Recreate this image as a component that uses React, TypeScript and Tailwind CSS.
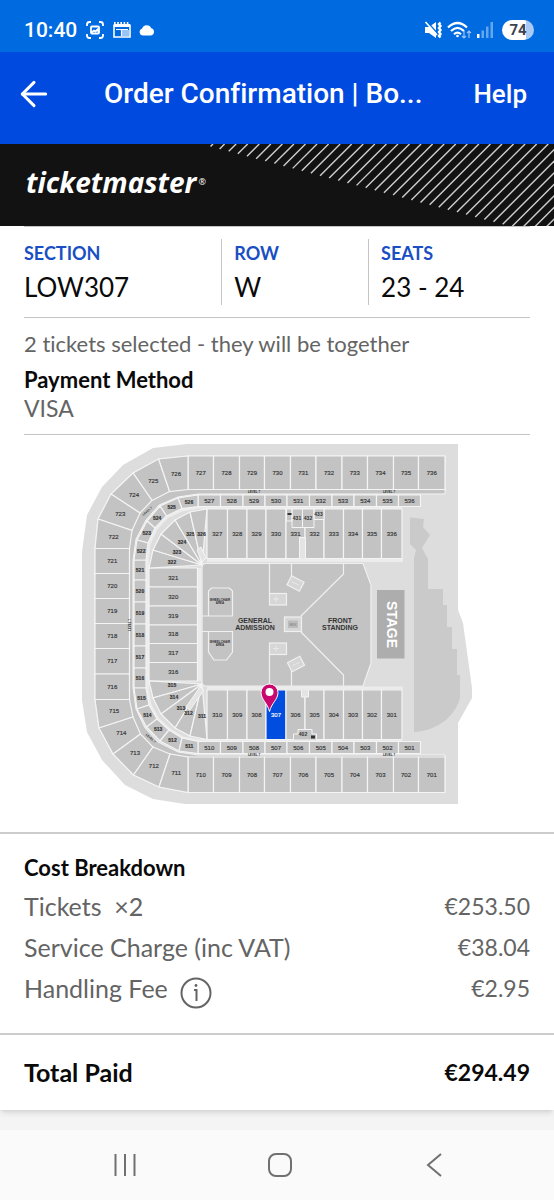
import { ArrowLeft } from 'lucide-react'

type Point = [number, number]
type Block = { label: string; points: Point[]; at?: Point; small?: boolean }

const range = (from: number, count: number, step: number) =>
  Array.from({ length: count }, (_, i) => String(from + i * step))

// straight run of blocks between consecutive x edges
const rowBlocks = (labels: string[], xs: number[], y1: number, y2: number): Block[] =>
  labels.map((label, i) => ({
    label,
    points: [[xs[i], y1], [xs[i + 1], y1], [xs[i + 1], y2], [xs[i], y2]],
  }))

const columnBlocks = (labels: string[], ys: number[], x1: number, x2: number, small = false): Block[] =>
  labels.map((label, i) => ({
    label,
    small,
    points: [[x1, ys[i]], [x2, ys[i]], [x2, ys[i + 1]], [x1, ys[i + 1]]],
  }))

// curved run, one block between each pair of outer/inner points
const bendBlocks = (labels: string[], outer: Point[], inner: Point[], small = false): Block[] =>
  labels.map((label, i) => ({
    label,
    small,
    points: [outer[i], outer[i + 1], inner[i + 1], inner[i]],
  }))

const fanBlocks = (labels: string[], outer: Point[], origin: Point, at: Point[]): Block[] =>
  labels.map((label, i) => ({
    label,
    small: true,
    at: at[i],
    points: [outer[i], outer[i + 1], origin],
  }))

const X700 = [188, 213.5, 239.5, 264.5, 290.5, 316, 342, 367.5, 393.5, 418.5, 445]
const X500 = [198, 220.5, 243, 265, 287, 309.5, 332, 354, 376.5, 398.5, 420.5]
const X300 = [207, 227.5, 247, 266, 286, 305, 324, 343.5, 362.5, 381.5, 402]

const blocks: Block[] = [
  ...rowBlocks(range(727, 10, 1), X700, 456, 489.5),
  ...rowBlocks(range(710, 10, -1), X700, 757, 792.5),
  ...columnBlocks(range(721, 6, -1), [548.5, 573.5, 598.5, 623.5, 648.5, 674, 699.5], 95, 129.5),
  ...bendBlocks(
    range(726, 5, -1),
    [[188, 456], [158.5, 459], [133, 473], [111, 494], [98, 519], [95, 548.5]],
    [[188, 489.5], [169.5, 491.5], [152, 500.5], [140, 513], [132, 530.5], [129.5, 548.5]],
  ),
  ...bendBlocks(
    range(715, 5, -1),
    [[95, 699.5], [99, 728], [113, 754], [133.5, 775], [159, 787], [188, 792.5]],
    [[129.5, 699.5], [133, 717], [140.5, 734], [153, 747], [170, 754], [188, 757]],
  ),
  ...rowBlocks(range(527, 10, 1), X500, 495, 506.5),
  ...rowBlocks(range(510, 10, -1), X500, 741.5, 753.5),
  ...columnBlocks(range(521, 6, -1), [560, 580, 602, 624, 646, 668, 688], 134, 146, true),
  ...bendBlocks(
    range(526, 5, -1),
    [[198, 495], [178, 498], [160, 506], [147, 521], [137, 540], [134, 560]],
    [[198, 506.5], [182, 508.5], [166.5, 516], [155, 528], [148, 543], [146, 560]],
    true,
  ),
  ...bendBlocks(
    range(515, 5, -1),
    [[134, 688], [137, 709], [146.5, 727], [160, 741], [179, 751], [198, 753.5]],
    [[146, 688], [149, 705], [157, 719], [169, 730], [182, 738], [198, 741.5]],
    true,
  ),
  ...rowBlocks(range(327, 10, 1), X300, 509, 558.5),
  ...rowBlocks(range(310, 10, -1), X300, 690, 739.5),
  ...columnBlocks(range(321, 6, -1), [568, 587, 606, 625, 643.5, 662.5, 681], 149, 197.5),
  ...fanBlocks(
    range(322, 5, 1),
    [[149, 568], [153, 550], [161, 534], [175, 520], [190, 512], [207, 509]],
    [202, 565],
    [[172, 562], [177, 551.5], [182, 542], [190.5, 534], [201.5, 534]],
  ),
  ...fanBlocks(
    range(315, 5, -1),
    [[149, 681], [153, 698], [161, 714], [175, 728], [190, 736], [207, 739.5]],
    [202, 684],
    [[172, 684.5], [174, 697], [181, 708], [188.5, 712.5], [202, 715.5]],
  ),
]

const SELECTED = '307'

const toPoints = (points: Point[]) => points.map((p) => p.join(',')).join(' ')

const centre = (points: Point[]): Point => [
  points.reduce((sum, p) => sum + p[0], 0) / points.length,
  points.reduce((sum, p) => sum + p[1], 0) / points.length,
]

function SeatMap() {
  return (
    <svg
      viewBox="82 443 391 362"
      className="mx-auto block w-full max-w-[391px]"
      fontFamily="'Liberation Sans', sans-serif"
      textAnchor="middle"
      role="img"
      aria-label="Seat map"
    >
      <path
        d="M458 444H187L153 448L123 465L102 487L87 515L82 552V700L87 732L102 760L125 785L153 799L185 804H458V723L472 698V688L463 623L458 610Z"
        fill="#dddddd"
      />
      {/* walkway between the 700s and the 500s */}
      <path
        d="M445 456H188L158.500 459L133 473L111 494L98 519L95 548V700L99 728L113 754L133.500 775L159 787L188 792.500H445V755H198L178 752L158 742L145 728L136 709L133 688V560L136 539L146 520L159 505L178 497L198 494H445Z"
        fill="#c3c3c3"
        stroke="#f4f4f4"
      />
      {/* aisle around the 300s */}
      <path
        d="M402 507.500H198L182 510L167 517L156 529L149 544L147.500 560V688L150 705L158 719L170 730L183 738L198 740.500H402"
        fill="none"
        stroke="#ececec"
        strokeWidth="3"
      />

      {blocks.map(({ label, points, at, small }) => {
        const [x, y] = at ?? centre(points)
        const selected = label === SELECTED
        return (
          <g key={label}>
            <polygon
              points={toPoints(points)}
              fill={selected ? '#004de0' : '#c3c3c3'}
              stroke="#f4f4f4"
              strokeWidth="1.2"
            />
            <text
              x={x}
              y={y + 2}
              fontSize={small ? 5 : 6}
              fontWeight={small ? 700 : 400}
              fill={selected ? '#ffffff' : '#333333'}
              stroke={selected ? '#ffffff' : '#333333'}
              strokeWidth="0.15"
            >
              {label}
            </text>
          </g>
        )
      })}

      {/* 400s */}
      <g fill="#c3c3c3" stroke="#f4f4f4">
        <path d="M286.500 509h5.500v12h-5.500zM292 509h10.500v18.500H292zM302.500 509h11.500v18.500h-11.500zM314 509h10v10.500h-10z" />
        <path d="M299.500 558.500V537.500h6V558.500M301.500 690v7h7v-7" fill="#e4e4e4" />
        <path d="M293.500 739.500V734H298V729.500H312V734H316.500V739.500" />
        <path d="M197 550l4 -3l5 11l-4 4zM186 707l4 3l14 -20l-4 -3z" fill="#e4e4e4" />
      </g>
      <g fontSize="5" fontWeight="700" fill="#333333">
        <text x="297" y="520">431</text>
        <text x="308" y="520">432</text>
        <text x="318.500" y="516">433</text>
        <text x="303" y="736">402</text>
        <path d="M287.500 513h4v2h-4zM311 735.500h4v3h-4z" />
      </g>

      {/* arena floor */}
      <g stroke="#f0f0f0" strokeWidth="1.2">
        <path d="M207 560.500H403M207 688H403M199.500 568V681" stroke="#ececec" strokeWidth="3" />
        <path
          d="M206 563.500H363L371 585V663L363 686H206Q202 686 202 682V567.500Q202 563.500 206 563.500Z"
          fill="#c3c3c3"
        />
        <path
          d="M269.500 563.500V593M269.500 655V686M291.500 563.500V578M291.500 669V686M343.500 563.500V574L301 616M301 632L343.500 675V686M202 616H232.500V591L229.500 588H211.500L208.500 591V616M202 631.500H232.500V652L226.500 660H214L208.500 652V631.500"
          fill="none"
        />
        <g fill="#d6d6d6">
          <rect x="269.500" y="593.500" width="17" height="11.500" />
          <rect x="269.500" y="643" width="17" height="11.500" />
          <rect x="284.500" y="617" width="17" height="14.500" />
          <rect x="-7" y="-5" width="14" height="10" transform="translate(295.500 583.500) rotate(28)" />
          <rect x="-7" y="-5" width="14" height="10" transform="translate(296 664) rotate(-28)" />
        </g>
        <rect x="288" y="620.500" width="10" height="7.500" fill="#bcbcbc" stroke="none" />
        <path d="M273 599h6M276 596v6M273 648.500h6M276 645.500v6M292 582l7 3M292.500 665.500l7 -3" stroke="#e8e8e8" strokeWidth="1" />
      </g>
      <text x="293" y="626" fontSize="4" fill="#777777">MIX</text>
      <g fontSize="7" fontWeight="700" fill="#333333" fontFamily="'Liberation Sans', sans-serif">
        <text x="255" y="623">GENERAL</text>
        <text x="255" y="629.500">ADMISSION</text>
        <text x="340" y="623">FRONT</text>
        <text x="340" y="629.500">STANDING</text>
      </g>
      <g fontSize="3" fontWeight="700" fill="#333333">
        <text x="220" y="601">WHEELCHAIR</text>
        <text x="220" y="604">AREA</text>
        <text x="220" y="643">WHEELCHAIR</text>
        <text x="220" y="646">AREA</text>
        <text x="254" y="493">LEVEL 7</text>
        <text x="389" y="493">LEVEL 7</text>
        <text x="254" y="756">LEVEL 7</text>
        <text x="389" y="756">LEVEL 7</text>
        <text transform="translate(131 625) rotate(-90)">LEVEL 7</text>
        <text transform="translate(148 512) rotate(-42)">LEVEL 7</text>
        <text transform="translate(150 739) rotate(42)">LEVEL 7</text>
      </g>

      <rect x="377" y="590" width="27.500" height="68.500" fill="#adadad" />
      <text transform="translate(386.500 624.500) rotate(90)" fontSize="14" fontWeight="700" fill="#ffffff">
        STAGE
      </text>
      <path
        d="M410 517.500L424 519L423 527L430 535L422 548L428 559V589H443V605H447V627H452V649H457V675H460V698Q457 710 446 720Q432 731 414 732V558L416 550L410 544Z"
        fill="#cacaca"
      />

      {/* pin */}
      <path
        d="M269.500 711.500C267.500 703 261 699.500 261 692.500a8.500 8.500 0 0 1 17 0C278 699.500 271.500 703 269.500 711.500Z"
        fill="#c8086e"
        stroke="#ffffff"
        strokeWidth="1"
      />
      <circle cx="269.500" cy="692" r="4" fill="#ffffff" />
    </svg>
  )
}

function StatusBar() {
  return (
    <div className="flex h-[52px] items-center justify-between bg-[#006be0] px-6 pt-2 text-white">
      <div className="flex items-center gap-2">
        <span className="font-['Roboto',sans-serif] text-[21px] leading-6 font-medium">10:40</span>
        <svg width="20" height="20" viewBox="0 0 20 20" fill="none" stroke="currentColor" strokeWidth="1.8">
          <path d="M2 6V4.500A2.500 2.500 0 0 1 4.500 2H6M14 2h1.500A2.500 2.500 0 0 1 18 4.500V6M18 14v1.500a2.500 2.500 0 0 1-2.500 2.500H14M6 18H4.500A2.500 2.500 0 0 1 2 15.500V14" />
          <rect x="6" y="6.500" width="8" height="7" rx="1" />
          <path d="M6.500 12.500l2.500-2 1.500 1 2-2 1.500 3" />
        </svg>
        <svg width="18" height="18" viewBox="0 0 18 18" fill="none" stroke="currentColor" strokeWidth="1.600">
          <path d="M1 3.500V16h16V3.500" />
          <path d="M1 4.500h16" strokeWidth="3" />
          <path d="M1 2h16" strokeWidth="2" strokeDasharray="1.600 1.600" />
          <path d="M3 8.500h12M8.500 8v7" strokeWidth="1.200" />
          <path d="M9 9h7v6H9z" fill="currentColor" stroke="none" opacity="0.6" />
        </svg>
        <svg width="16" height="12" viewBox="0 0 16 12" fill="currentColor">
          <path d="M4 11.500A3.500 3.500 0 0 1 3 4.700 5 5 0 0 1 12.300 4.300 3.700 3.700 0 0 1 12 11.500Z" />
        </svg>
      </div>
      <div className="-mr-1 flex items-center gap-1">
        <svg width="19" height="18" viewBox="0 0 19 18" fill="currentColor">
          <path d="M1 6h4l7-5v16l-7-5H1Z" />
          <path d="M2.500 0l11.500 13" stroke="#006be0" strokeWidth="1.500" />
          <path d="M1.500 1l11.500 13" stroke="currentColor" strokeWidth="1.600" />
          <path d="M16.500 1.500l-1.500 1.500 1.500 2-1.500 2 1.500 2-1.500 2 1.500 2-1.500 2 1.500 1.500" fill="none" stroke="currentColor" strokeWidth="2.400" />
        </svg>
        <svg width="25" height="18" viewBox="0 0 25 18" fill="none" stroke="currentColor" strokeWidth="2.200">
          <path d="M1 6.500Q10.500-2.500 20 6.500M4 10Q10.500 3.500 17 10M7 13.200Q10.500 10 14 13.200" />
          <circle cx="10.500" cy="15" r="1.300" fill="currentColor" stroke="none" />
          <path d="M17 10v7M15 15l2 2 2-2M22 17v-7M20 12l2-2 2 2" strokeWidth="1.200" opacity="0.6" />
        </svg>
        <svg className="mr-1" width="18" height="18" viewBox="0 0 18 18" fill="currentColor">
          <rect x="1" y="13" width="2.500" height="4" />
          <rect x="5.500" y="9.500" width="2.500" height="7.500" opacity="0.4" />
          <rect x="10" y="5.500" width="2.500" height="11.500" opacity="0.4" />
          <rect x="14.500" y="1" width="2.500" height="16" opacity="0.4" />
        </svg>
        <span className="flex h-5 w-8 items-center justify-center rounded-full bg-linear-to-r from-white from-75% to-[#a9cbf5] to-75% font-['Roboto',sans-serif] text-[15px] leading-5 font-bold text-[#3d4450]">
          74
        </span>
      </div>
    </div>
  )
}

function Banner() {
  const stripes = Array.from({ length: 44 }, (_, i) => ({ x: 10.5 + i * 9.13, y: 2.5 + i * 2.43 }))

  return (
    <div className="relative flex h-[82px] items-center overflow-hidden bg-[#121212] px-[26px] pb-1.5">
      <svg
        className="absolute top-0 right-0"
        width="354"
        height="82"
        viewBox="0 0 354 82"
        stroke="#cfcfcf"
        strokeWidth="1.400"
        aria-hidden="true"
      >
        {stripes.map(({ x, y }) => (
          <line key={x} x1={x} y1={y} x2={x + y} y2="0" />
        ))}
      </svg>
      <a href="#" className="relative flex items-center gap-0.5 font-['Open_Sans',sans-serif] text-white">
        <span className="text-[28px] leading-8 font-bold italic">ticketmaster</span>
        <span className="text-[9px] leading-3">®</span>
      </a>
    </div>
  )
}

const details = [
  { label: 'SECTION', value: 'LOW307' },
  { label: 'ROW', value: 'W' },
  { label: 'SEATS', value: '23 - 24' },
]

const costs = [
  { label: 'Tickets  ×2', amount: '€253.50' },
  { label: 'Service Charge (inc VAT)', amount: '€38.04' },
  { label: 'Handling Fee', amount: '€2.95', info: true },
]

export default function App() {
  return (
    <div className="flex min-h-screen flex-col bg-[#f4f4f4] font-['Lato',sans-serif] text-[#0a0a0a] [font-variant-ligatures:none]">
      <StatusBar />

      <header className="flex h-[92px] items-center bg-[#004ae0] pr-[27px] pb-2 pl-3.5 font-['Roboto',sans-serif] font-medium text-white">
        <button aria-label="Back" className="shrink-0">
          <ArrowLeft size={40} strokeWidth={1.8} />
        </button>
        <h1 className="ml-[50px] flex-1 truncate text-[28px] leading-9">Order Confirmation | Bo...</h1>
        <a href="#" className="ml-4 text-[26px] leading-9">Help</a>
      </header>

      <Banner />

      <main className="bg-white shadow-md">
        <div className="px-6">
          <dl className="grid grid-cols-[39fr_29fr_32fr] border-y border-[#c4c4c4] py-3">
            {details.map(({ label, value }) => (
              <div
                key={label}
                className="border-l border-[#c4c4c4] pl-3 first:border-l-0 first:pl-0"
              >
                <dt className="pt-0.5 text-[18px] leading-6 font-bold text-[#1a4fc4]">{label}</dt>
                <dd className="pt-1.5 pb-0.5 text-[26px] leading-8">{value}</dd>
              </div>
            ))}
          </dl>
          <div className="border-b border-[#c4c4c4] py-3">
            <p className="text-[22px] leading-7 text-[#646464]">2 tickets selected - they will be together</p>
            <h2 className="pt-2 text-[22px] leading-7 font-bold">Payment Method</h2>
            <p className="text-[23px] leading-7 text-[#646464]">VISA</p>
          </div>
          <div className="pt-2 pb-[27px]">
            <SeatMap />
          </div>
        </div>

        <section className="border-y-2 border-[#cccccc] px-6 pt-5 pb-6">
          <h2 className="text-[22px] leading-7 font-bold">Cost Breakdown</h2>
          <dl className="mt-1 text-[#646464]">
            {costs.map(({ label, amount, info }) => (
              <div key={label} className="flex h-[41px] items-center justify-between">
                <dt className="flex items-center gap-3 text-[25px] whitespace-pre">
                  {label}
                  {info && (
                    <button aria-label="About the handling fee" className="mt-2">
                      <svg width="32" height="32" viewBox="0 0 32 32" fill="none" stroke="currentColor" strokeWidth="2">
                        <circle cx="16" cy="16" r="14.500" />
                        <path d="M14 13h2.500v11" />
                        <circle cx="16" cy="8.500" r="1.400" fill="currentColor" stroke="none" />
                      </svg>
                    </button>
                  )}
                </dt>
                <dd className="text-[23px]">{amount}</dd>
              </div>
            ))}
          </dl>
        </section>

        <div className="flex h-[75px] items-center justify-between px-6 font-bold">
          <span className="text-[25px]">Total Paid</span>
          <span className="text-[23px]">€294.49</span>
        </div>
      </main>

      <nav className="mt-5 flex flex-1 items-center justify-around bg-[#fafafa] pr-[42px] pl-[47px] text-[#707070]">
        <button aria-label="Recent apps">
          <svg width="24" height="24" viewBox="0 0 24 24" stroke="currentColor" strokeWidth="2">
            <path d="M2.500 1v22M12 1v22M21.500 1v22" />
          </svg>
        </button>
        <button aria-label="Home">
          <svg width="24" height="24" viewBox="0 0 24 24" fill="none" stroke="currentColor" strokeWidth="2">
            <rect x="1" y="1" width="22" height="22" rx="7" />
          </svg>
        </button>
        <button aria-label="Go back">
          <svg width="24" height="24" viewBox="0 0 24 24" fill="none" stroke="currentColor" strokeWidth="2">
            <path d="M18 1L5 12l13 11" />
          </svg>
        </button>
      </nav>
    </div>
  )
}
